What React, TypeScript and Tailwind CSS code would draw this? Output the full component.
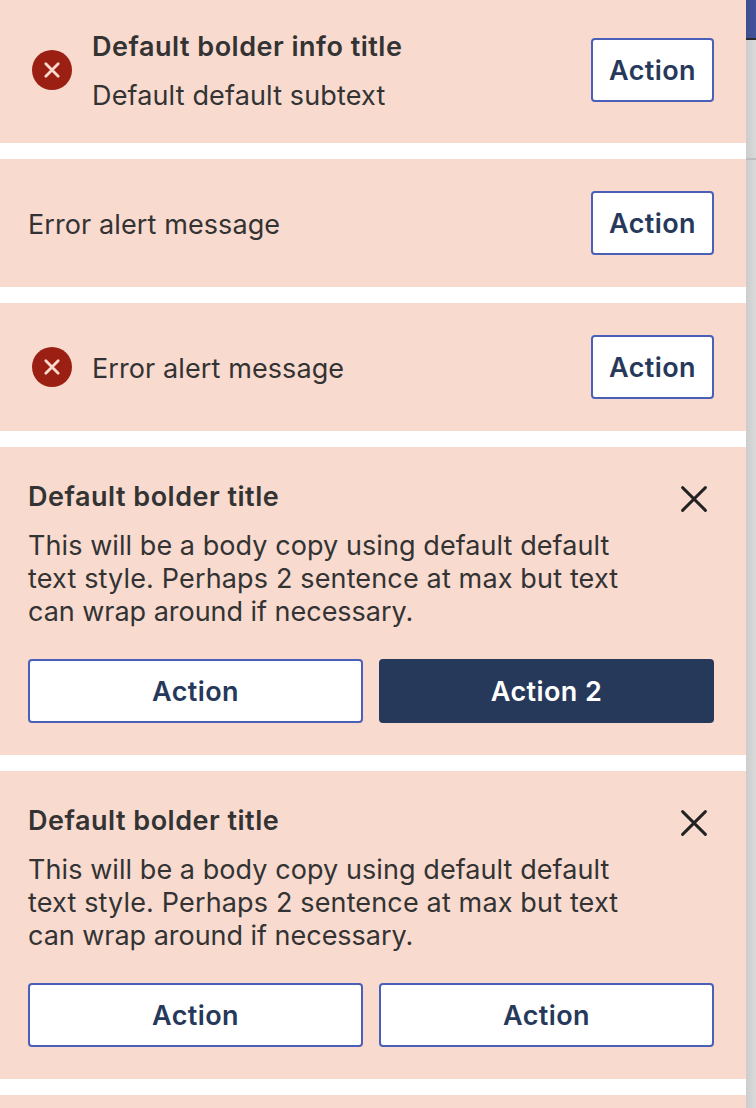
import type { ReactNode } from "react";

function ErrorIcon() {
  return (
    <svg className="mr-5 ml-1 size-10 shrink-0" viewBox="0 0 40 40" fill="none">
      <circle cx="20" cy="20" r="20" fill="#9b1f13" />
      <path d="M13.8 13.8 26.2 26.2M26.2 13.8 13.8 26.2" stroke="#f8dacf" strokeWidth="2.8" strokeLinecap="round" />
    </svg>
  );
}

function CloseIcon() {
  return (
    <svg className="mt-[6px] mr-[7px] size-[26px] shrink-0" viewBox="0 0 26 26" fill="none">
      <path d="M1.6 1.6 24.4 24.4M24.4 1.6 1.6 24.4" stroke="#222" strokeWidth="2.9" strokeLinecap="round" />
    </svg>
  );
}

function Button({ children, solid = false, wide = false }: { children: ReactNode; solid?: boolean; wide?: boolean }) {
  return (
    <button
      className={`h-16 rounded-[4px] border-2 pt-0.5 text-[27px] font-semibold tracking-[0.4px] ${
        wide ? "flex-1" : "w-[123px] shrink-0"
      } ${solid ? "border-[#27395b] bg-[#27395b] text-white" : "border-[#4a5fb8] bg-white text-[#27395b]"}`}
    >
      {children}
    </button>
  );
}

function Title({ children }: { children: ReactNode }) {
  return <h2 className="text-[27px] leading-[33px] font-semibold tracking-[0.5px] whitespace-nowrap">{children}</h2>;
}

function Message({ icon = false }: { icon?: boolean }) {
  return (
    <section className="flex h-32 items-center bg-[#f8dacf] pr-8 pl-7">
      {icon && <ErrorIcon />}
      <p className="flex-1 pt-0.5 text-[27px] leading-[33px] tracking-[0.1px]">Error alert message</p>
      <Button>Action</Button>
    </section>
  );
}

function Detail({ second, solid = false }: { second: string; solid?: boolean }) {
  return (
    <section className="h-[308px] bg-[#f8dacf] pt-[33px] pr-8 pl-7">
      <div className="flex justify-between">
        <div>
          <Title>Default bolder title</Title>
          <p className="mt-4 text-[27px] leading-[33px] whitespace-nowrap">
            <span className="tracking-[0.07px]">This will be a body copy using default default</span>
            <br />
            <span className="tracking-[0.15px]">text style. Perhaps 2 sentence at max but text</span>
            <br />
            <span className="tracking-[-0.03px]">can wrap around if necessary.</span>
          </p>
        </div>
        <CloseIcon />
      </div>
      <div className="mt-[31px] flex gap-4">
        <Button wide>Action</Button>
        <Button wide solid={solid}>{second}</Button>
      </div>
    </section>
  );
}

export default function App() {
  return (
    <main className="flex h-[1108px] w-[756px] overflow-hidden bg-white font-['Inter',sans-serif] text-[#333]">
      <div className="flex w-[746px] shrink-0 flex-col gap-4">
        <section className="flex h-[143px] shrink-0 items-center bg-[#f8dacf] pr-8 pb-[3px] pl-7">
          <ErrorIcon />
          <div className="flex-1 pt-px">
            <Title>Default bolder info title</Title>
            <p className="mt-4 text-[27px] leading-[33px] tracking-[0.14px]">Default default subtext</p>
          </div>
          <Button>Action</Button>
        </section>
        <Message />
        <Message icon />
        <Detail second="Action 2" solid />
        <Detail second="Action" />
        <div className="h-[13px] shrink-0 bg-[#f8dacf]" />
      </div>
      <aside className="flex flex-1 flex-col bg-linear-to-r from-[#cdcdcd] to-[#dadada]">
        <div className="h-10 border-b-2 border-[#2b2929] bg-linear-to-r from-[#404e90] to-[#43529b]" />
        <div className="h-[120px] border-b-2 border-[#bdbdbd]" />
      </aside>
    </main>
  );
}
